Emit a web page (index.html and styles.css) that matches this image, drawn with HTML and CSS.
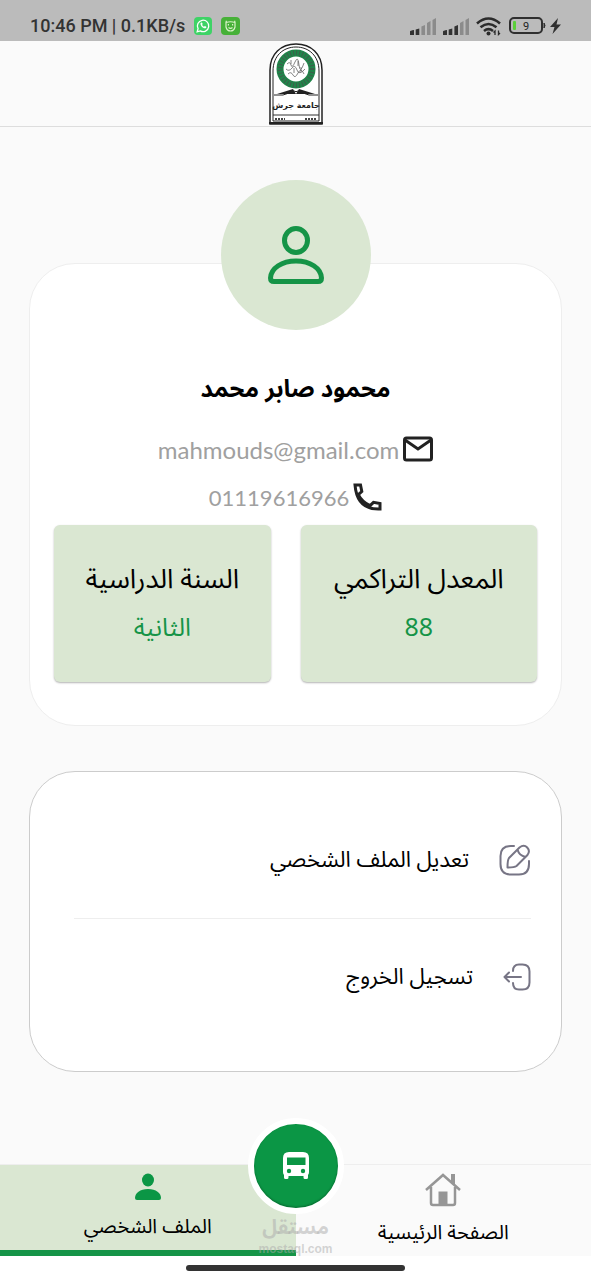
FILE: index.html
```html
<!DOCTYPE html>
<html lang="ar" dir="rtl">
<head>
<meta charset="utf-8">
<meta name="viewport" content="width=device-width, initial-scale=1">
<title>الملف الشخصي</title>
<link rel="stylesheet" href="styles.css">
</head>
<body>

<div class="status" dir="ltr">
  <span class="status-text">10:46 PM | 0.1KB/s</span>
  <svg class="app-icon" width="18" height="18" viewBox="0 0 18 18">
    <rect width="18" height="18" rx="4" fill="#3ed366"/>
    <path d="M3.2 14.8l.9-3.1a5.7 5.7 0 1 1 2.200 2.200z" fill="none" stroke="#fff" stroke-width="1.300"/>
    <path d="M6.600 6c-.8 2.300 2.600 6 5 5.200.9-.3.9-1.500.4-1.800l-1.200-.5-.8.800c-.9-.4-1.500-1-1.900-1.900l.6-.8-.6-1.300c-.4-.5-1.200-.3-1.500.3z" fill="#fff"/>
  </svg>
  <svg class="app-icon" width="19" height="18" viewBox="0 0 19 18">
    <rect width="19" height="18" rx="4" fill="#47b138"/>
    <path d="M5.500 5l-.6-1.200M13.500 5l.6-1.200M5 5.500q4.500-1.500 9 0v4.500q-1 4-4.500 4T5 10z" fill="none" stroke="#d9f3c8" stroke-width="1.200"/>
    <path d="M7.400 7v1.500M11.600 7v1.500M7.500 10.500q2 1.600 4 0" fill="none" stroke="#d9f3c8" stroke-width="1.200"/>
  </svg>
  <span class="spacer"></span>
  <svg width="26" height="17" viewBox="0 0 26 17">
    <path d="M0 13.500q0-1 4-1.500v5H0zM5.700 11.500l3.600-1V17H5.700z" fill="#333"/>
    <path d="M11.400 8.500l3.600-1.500v10h-3.600zM17 5l3.500-2v14H17zM22.500 2L26 0v17h-3.500z" fill="#8b8b8b"/>
  </svg>
  <svg width="26" height="17" viewBox="0 0 26 17">
    <path d="M0 13.500q0-1 4-1.500v5H0zM5.700 11.500l3.600-1V17H5.700zM11.400 8.500l3.600-1.500v10h-3.600z" fill="#333"/>
    <path d="M17 5l3.500-2v14H17zM22.500 2L26 0v17h-3.500z" fill="#8b8b8b"/>
  </svg>
  <svg width="26" height="19" viewBox="0 0 26 19">
    <g fill="none" stroke="#2b2b2b" stroke-width="2.600">
      <path d="M1 6.500Q12.500-3.500 24 6.500"/>
      <path d="M4.500 10.300q8-6.600 16 0"/>
      <path d="M8 14q4.500-3.600 9 0"/>
    </g>
    <circle cx="12.500" cy="16.500" r="2" fill="#2b2b2b"/>
    <path d="M19 18v-4l-1.500 1.500M22.500 13.500v4L24 16" fill="none" stroke="#2b2b2b" stroke-width="1.300"/>
  </svg>
  <svg width="37" height="18" viewBox="0 0 37 18">
    <rect x="1" y="1" width="32" height="15" rx="4" fill="none" stroke="#2f2f2f" stroke-width="2"/>
    <rect x="4" y="4" width="3" height="9" rx="1" fill="#5bd03a"/>
    <path d="M35 6q2 2.500 0 5z" fill="#2f2f2f" stroke="#2f2f2f"/>
    <text x="17" y="13" class="battery-text">9</text>
  </svg>
  <svg class="bolt" width="11" height="16" viewBox="0 0 11 16"><path d="M8 0L0 9h4.500L2.500 16 11 6.500H6.500z" fill="#2f2f2f"/></svg>
</div>

<header class="header">
  <svg class="logo" width="54" height="82" viewBox="0 0 54 82" direction="rtl">
    <path d="M1 81V27C1 11 12 1 27 1s26 10 26 26v54z" fill="#fff" stroke="#222" stroke-width="1.500"/>
    <path d="M4 78V28C4 13 14 4 27 4s23 9 23 24v50z" fill="none" stroke="#222" stroke-width="1"/>
    <circle cx="27" cy="26" r="16" fill="#fff" stroke="#20854a" stroke-width="7"/>
    <circle cx="27" cy="26" r="16" fill="none" stroke="#3d5f4a" stroke-width="5" stroke-dasharray="1 2"/>
    <path d="M18 21q3-3 4 1t4-3 4 3 5-2M17 26q3 3 6-1t5 2 8-1M19 31q3-3 5 1t5-2 6 1M22 17v4M29 18v5M25 25v5M32 24v5" fill="none" stroke="#666" stroke-width=".8"/>
    <path d="M5 52h9l12-4 1 1 1-1 12 4h9" fill="none" stroke="#222" stroke-width="1"/>
    <path d="M8 51l16-5 3 5zM27 51l3-5 16 5z" fill="#222"/>
    <text x="27" y="65" class="logo-name">جامعة جرش</text>
    <path d="M4 72h46" stroke="#333" stroke-width="1"/>
    <path d="M6 76h10M36 76h12" stroke="#444" stroke-width="2" stroke-dasharray="2 1"/>
    <path d="M0 80h54" stroke="#222" stroke-width="2"/>
  </svg>
</header>

<main>
  <section class="card profile">
    <div class="avatar">
      <svg width="56" height="60" viewBox="0 0 56 60" fill="none" stroke="#159447" stroke-width="5">
        <ellipse cx="28" cy="15.500" rx="11.500" ry="12"/>
        <path d="M2.500 53C3 43 14 36 28 36s25 7 25.500 17q0 3.500-3.500 3.500H6q-3.500 0-3.500-3.500z"/>
      </svg>
    </div>
    <h1 class="name">محمود صابر محمد</h1>
    <div class="contact">
      <svg width="30" height="26" viewBox="0 0 30 26" fill="none" stroke="#222" stroke-width="3">
        <rect x="1.500" y="2" width="27" height="22" rx="2"/>
        <path d="M2 4l13 9 13-9"/>
      </svg>
      <a href="mailto:mahmouds@gmail.com" dir="ltr">mahmouds@gmail.com</a>
    </div>
    <div class="contact phone">
      <svg width="29" height="30" viewBox="2 0 29 30" fill="none" stroke="#222" stroke-width="3">
        <path d="M4 3h5.500l1.300 6.500-3.500 3.200Q11 20 19 23.700l3.500-3.400 6.500 1.300V27Q6 28 4 3z"/>
      </svg>
      <a href="tel:01119616966" dir="ltr">01119616966</a>
    </div>
    <div class="stats">
      <div class="stat">
        <div>المعدل التراكمي</div>
        <div class="value">88</div>
      </div>
      <div class="stat">
        <div>السنة الدراسية</div>
        <div class="value">الثانية</div>
      </div>
    </div>
  </section>

  <section class="card menu">
    <a href="#edit" class="item">
      <svg width="32" height="32" viewBox="0 0 32 32" fill="none" stroke="#777585" stroke-width="2" stroke-linecap="round" stroke-linejoin="round">
        <path d="M15 2h-3Q1.500 2 1.500 12v8q0 10.500 10.500 10.500h8q10 0 10-10.500v-3"/>
        <path d="M20.500 3.500L10 14Q8.500 16 8.500 23.500q7 0 9-1.500L28.500 11q3-4-.3-7.500t-7.700 0zM18.500 5.500q1.500 6 8 7.500"/>
      </svg>
      <span>تعديل الملف الشخصي</span>
    </a>
    <a href="#logout" class="item">
      <svg width="28" height="28" viewBox="0 0 28 28" fill="none" stroke="#777585" stroke-width="2" stroke-linecap="round" stroke-linejoin="round">
        <path d="M10 8q0-6.500 6-6.500h3.500q7 0 7 7v11q0 7-7 7H16q-6 0-6-6.500M18 14H2M6 9.500L1.500 14 6 18.500"/>
      </svg>
      <span>تسجيل الخروج</span>
    </a>
  </section>
</main>

<nav class="tabs">
  <a href="#home" class="tab">
    <svg width="36" height="34" viewBox="0 0 36 34">
      <path d="M1 17L18 2l17 15M6 14v16q0 2 2 2h20q2 0 2-2V14" fill="none" stroke="#969696" stroke-width="2.500"/>
      <path d="M26 1h4v11l-4-3.500zM13.500 18.500h9V32h-9z" fill="#969696"/>
    </svg>
    <span>الصفحة الرئيسية</span>
  </a>
  <a href="#profile" class="tab active">
    <svg width="26" height="28" viewBox="0 0 26 28" fill="#0b9645">
      <ellipse cx="13" cy="7" rx="6" ry="6.500"/>
      <path d="M0 25c0-5 5-9 13-9s13 4 13 9q0 2-2 2H2q-2 0-2-2z"/>
    </svg>
    <span>الملف الشخصي</span>
  </a>
  <button class="bus" aria-label="الباص">
    <svg width="26" height="28" viewBox="0 0 26 28">
      <path d="M0 6q0-6 6-6h14q6 0 6 6v14q0 2-1 3v2.500q0 1.500-1.500 1.500H22q-1.500 0-1.500-1.500V24h-15v1.500Q5.500 27 4 27H2.500Q1 27 1 25.500V23q-1-1-1-3z" fill="#fff"/>
      <path d="M4 5.500h18.500V13H4z" fill="#0b9645"/>
      <circle cx="6" cy="19" r="2.200" fill="#0b9645"/>
      <circle cx="20" cy="19" r="2.200" fill="#0b9645"/>
    </svg>
  </button>
  <div class="mark">
    <b>مستقل</b>
    <small dir="ltr">mostaql.com</small>
  </div>
</nav>
<div class="gesture"></div>

</body>
</html>
```
FILE: styles.css
```css
* {box-sizing:border-box;}
body {margin:0; min-height:100vh; display:flex; flex-direction:column; background-color:#fafafa; color:#000; font-family:"Noto Sans Arabic","DejaVu Sans",sans-serif;}
a {color:inherit; text-decoration:none;}
svg {display:block; flex:none;}

.status {display:flex; align-items:center; gap:7px; height:41px; padding:11px 30px 0; background-color:#bbb;}
.status-text {margin-right:2px; font:500 18px/24px Roboto,sans-serif; color:#333; white-space:nowrap;}
.app-icon {margin-right:2px;}
.bolt {margin-left:-3px;}
.spacer {flex:1;}
.battery-text {font:400 11px Roboto,sans-serif; text-anchor:middle; fill:#222;}

.header {display:flex; justify-content:center; padding:2px 0 1px; border-bottom:1px solid #ddd;}
.logo-name {font:bold 8px "DejaVu Sans",sans-serif; text-anchor:middle; fill:#222;}

main {padding:136px 29px 40px;}
.card {background-color:#fff; border:1px solid #eee; border-radius:46px;}
.profile {padding:0 24px 43px;}
.avatar {width:150px; height:150px; margin:-84px auto 40px; display:flex; align-items:center; justify-content:center; border-radius:50%; background-color:#dae7d2;}
.name {margin:0 0 15px; text-align:center; font-size:24px; line-height:40px; font-weight:bold;}
.contact {display:flex; align-items:center; justify-content:center; gap:4px; height:48px; font-family:Lato,sans-serif; font-size:24px; color:#a0a0a0;}
.phone {font-size:22px;}
.stats {display:grid; grid-template-columns:12fr 11fr; gap:30px; margin-top:4px;}
.stat {padding:31px 8px 30px; border-radius:6px; background-color:#dae7d2; box-shadow:0 1px 2px rgba(0,0,0,.3); text-align:center; font-size:27px; line-height:48px; white-space:nowrap;}
.value {font-size:25px; color:#159447;}

.menu {margin-top:45px; padding:29px 30px 36px 44px; border-color:#ccc;}
.item {display:flex; align-items:center; gap:30px; height:117px; font-size:22px; white-space:nowrap;}
.item + .item {border-top:1px solid #eee;}

.tabs {position:relative; display:flex; height:92px; margin-top:auto;}
.tab {flex:1; display:flex; flex-direction:column; align-items:center; gap:8px; padding-top:8px; border-top:1px solid #eee; font-size:20px; line-height:36px; white-space:nowrap;}
.active {background-color:#dae7d2; border-bottom:6px solid #159447;}
.bus {position:absolute; left:50%; top:2px; width:96px; height:96px; transform:translate(-50%,-50%); display:flex; align-items:center; justify-content:center; padding:0; border:6px solid #fff; border-radius:50%; background-color:#0b9645; box-shadow:inset 0 -1px 2px rgba(0,0,0,.3);}
.mark {position:absolute; left:50%; bottom:0; transform:translateX(-50%); display:flex; flex-direction:column; align-items:center; color:rgba(170,170,170,.5); font-size:20px; line-height:28px;}
.mark small {font:bold 12px/14px "Liberation Sans",sans-serif;}
.gesture {display:flex; justify-content:center; height:24px; padding-top:9px; background-color:#fff;}
.gesture::before {content:""; width:37%; height:6px; border-radius:3px; background-color:#333;}
```
